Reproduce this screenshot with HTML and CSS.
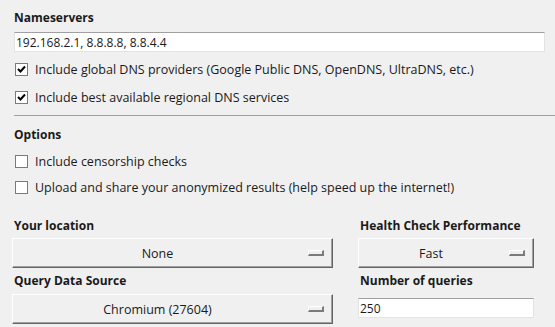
FILE: index.html
```html
<!DOCTYPE html>
<html lang="en">
<head>
    <meta charset="UTF-8">
    <title>Benchmark settings</title>
    <link rel="stylesheet" href="styles.css">
</head>
<body>
    <div class="panel">
        <!-- Nameservers -->
        <section class="group">
            <div class="label">Nameservers</div>
            <input class="field field-wide" type="text" value="192.168.2.1, 8.8.8.8, 8.8.4.4">
            <label class="check first">
                <span class="box"><svg width="9" height="9" viewBox="0 0 9 9"><path d="M1 4 L3.5 6.5 L8 1.5" fill="none" stroke="#000" stroke-width="2"/></svg></span>
                Include global DNS providers (Google Public DNS, OpenDNS, UltraDNS, etc.)
            </label>
            <label class="check">
                <span class="box"><svg width="9" height="9" viewBox="0 0 9 9"><path d="M1 4 L3.5 6.5 L8 1.5" fill="none" stroke="#000" stroke-width="2"/></svg></span>
                Include best available regional DNS services
            </label>
        </section>

        <div class="separator"></div>

        <!-- Options -->
        <section class="group options">
            <div class="label">Options</div>
            <label class="check first">
                <span class="box"></span>
                Include censorship checks
            </label>
            <label class="check">
                <span class="box"></span>
                Upload and share your anonymized results (help speed up the internet!)
            </label>
        </section>

        <!-- Selects -->
        <div class="choices">
            <div class="label">Your location</div>
            <div class="label">Health Check Performance</div>
            <div class="select"><span class="value">None</span><span class="grip"></span></div>
            <div class="select"><span class="value">Fast</span><span class="grip"></span></div>
            <div class="label second">Query Data Source</div>
            <div class="label second">Number of queries</div>
            <div class="select"><span class="value">Chromium (27604)</span><span class="grip"></span></div>
            <input class="field field-small" type="text" value="250">
        </div>
    </div>
</body>
</html>
```

FILE: styles.css
```css
body {
    margin: 0;
    background-color: #f0f0f0;
    font-family: "Open Sans", "Noto Sans", sans-serif;
    font-size: 12.5px;
    color: #1a1a1a;
}
.panel {
    padding: 10px 0 0 14px;
}
.label {
    font-weight: bold;
    font-size: 12px;
    line-height: 16px;
    height: 16px;
}
.field {
    display: block;
    box-sizing: border-box;
    background-color: white;
    border: 1px solid #e3e3e3;
    border-top-color: #a0a0a0;
    font-family: inherit;
    font-size: 12px;
    color: #1a1a1a;
    padding: 0 1px;
    margin: 0;
    outline: none;
}
.field-wide {
    width: 531px;
    height: 20px;
    margin-top: 6px;
}
.check {
    display: flex;
    align-items: center;
    height: 20px;
    margin-top: 8px;
}
.check.first {
    margin-top: 7px;
}
.box {
    box-sizing: border-box;
    width: 13px;
    height: 13px;
    margin: 0 7px 0 1px;
    border: 1px solid #7a7a7a;
    background-color: white;
    display: flex;
    align-items: center;
    justify-content: center;
}
.separator {
    height: 0;
    border-top: 1px solid #a0a0a0;
    margin-top: 8px;
}
.options {
    margin-top: 11px;
}
.options .check.first {
    margin-top: 8px;
}
.options .check {
    margin-top: 6px;
}
.choices {
    display: grid;
    grid-template-columns: 321px 176px;
    column-gap: 25px;
    margin: 21px 0 0 -2px;
}
.choices .label {
    padding-left: 2px;
    margin-bottom: 4px;
}
.choices .label.second {
    margin-top: 5px;
    margin-bottom: 5px;
}
.select {
    box-sizing: border-box;
    height: 30px;
    display: flex;
    align-items: center;
    background-color: #f0f0f0;
    border: 1px solid;
    border-color: #ffffff #646464 #646464 #ffffff;
    box-shadow: inset -1px -1px 0 #a0a0a0;
}
.value {
    flex: 1;
    text-align: center;
}
.grip {
    box-sizing: border-box;
    width: 16px;
    height: 6px;
    margin: 0 8px 0 6px;
    border-style: solid;
    border-width: 1px 2px 2px 1px;
    border-color: #ffffff #7a7a7a #7a7a7a #ffffff;
}
.field-small {
    width: 176px;
    height: 20px;
    margin-top: 4px;
}
```
